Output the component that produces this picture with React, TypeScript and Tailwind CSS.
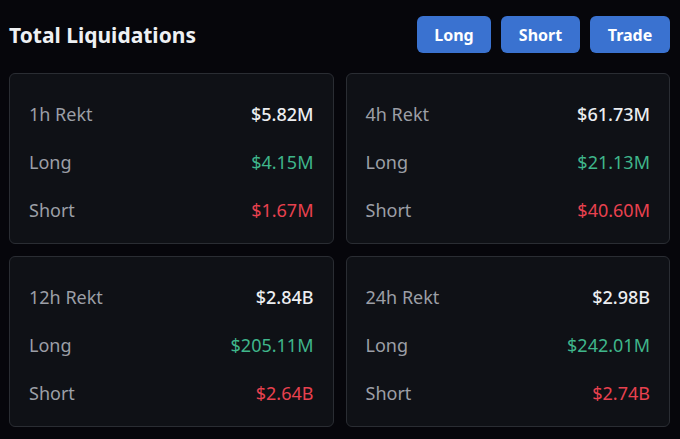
import React from 'react'

type Stat = {
  period: string
  total: string
  long: string
  short: string
}

const stats: Stat[] = [
  { period: '1h', total: '$5.82M', long: '$4.15M', short: '$1.67M' },
  { period: '4h', total: '$61.73M', long: '$21.13M', short: '$40.60M' },
  { period: '12h', total: '$2.84B', long: '$205.11M', short: '$2.64B' },
  { period: '24h', total: '$2.98B', long: '$242.01M', short: '$2.74B' },
]

const buttons = [
  { label: 'Long', width: 'w-[74px]' },
  { label: 'Short', width: 'w-[79px]' },
  { label: 'Trade', width: 'w-[80px]' },
]

const font = { fontFamily: '"Noto Sans", "Open Sans", sans-serif' }

function Row({ label, value, valueClass }: { label: string; value: string; valueClass: string }) {
  return (
    <div className="flex h-[48px] items-center justify-between">
      <span className="text-[18px] text-[#9c9fa6]">{label}</span>
      <span className={`text-[18px] ${valueClass}`}>{value}</span>
    </div>
  )
}

export default function App() {
  return (
    <div className="h-[439px] w-[680px] bg-[#06060b] pt-4" style={font}>
      <div className="ml-[9px] w-[661px]">
        <div className="flex h-[37px] items-center justify-between">
          <h1 className="mt-[3px] text-[21px] font-bold text-[#eef0f3]">Total Liquidations</h1>
          <div className="flex gap-[10px]">
            {buttons.map((b) => (
              <button
                key={b.label}
                className={`h-[37px] ${b.width} rounded-md bg-[#3a72d0] text-[16px] font-bold text-white`}
              >
                {b.label}
              </button>
            ))}
          </div>
        </div>

        <div className="mt-5 grid grid-cols-2 gap-3">
          {stats.map((s) => (
            <div
              key={s.period}
              className="h-[171px] rounded-md border border-[#2a2d33] bg-[#0f1116] px-[19px] pt-4"
            >
              <Row label={`${s.period} Rekt`} value={s.total} valueClass="font-medium text-[#eceef1]" />
              <Row label="Long" value={s.long} valueClass="text-[#3fb68b]" />
              <Row label="Short" value={s.short} valueClass="text-[#e8414f]" />
            </div>
          ))}
        </div>
      </div>
    </div>
  )
}
